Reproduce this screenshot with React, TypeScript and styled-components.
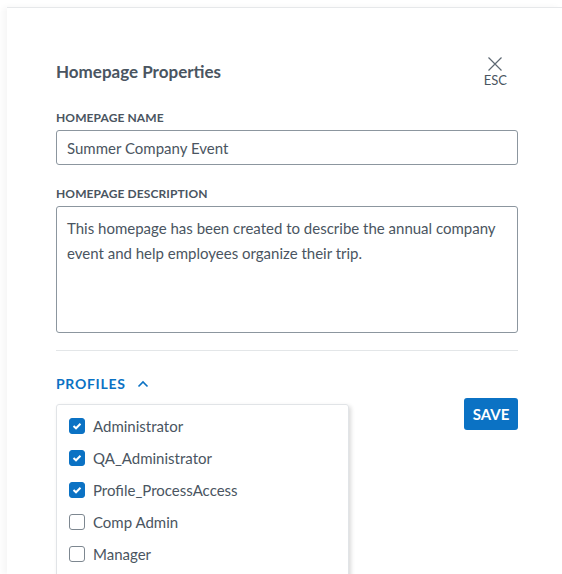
import React, { useState } from 'react';
import styled, { createGlobalStyle } from 'styled-components';

const GlobalStyle = createGlobalStyle`
  html, body {
    margin: 0;
    padding: 0;
    background: #ffffff;
  }
  body {
    font-family: Lato, "Noto Sans", sans-serif;
    color: #4a5561;
  }
`;

const profiles = [
  { name: 'Administrator', checked: true },
  { name: 'QA_Administrator', checked: true },
  { name: 'Profile_ProcessAccess', checked: true },
  { name: 'Comp Admin', checked: false },
  { name: 'Manager', checked: false },
];

const App: React.FC = () => {
  const [items, setItems] = useState(profiles);

  const toggle = (index: number) => {
    setItems(items.map((el, i) => (i === index ? { ...el, checked: !el.checked } : el)));
  };

  return (
    <Page>
      <GlobalStyle />
      <Panel>
        <Header>
          <Title>Homepage Properties</Title>
          <CloseButton>
            <svg width="16" height="16" viewBox="0 0 16 16">
              <path d="M1.5 1.5 L14.5 14.5 M14.5 1.5 L1.5 14.5" stroke="#5d6873" strokeWidth="1.2" />
            </svg>
            <EscText>ESC</EscText>
          </CloseButton>
        </Header>

        <Label>Homepage Name</Label>
        <TextInput defaultValue="Summer Company Event" />

        <Label $top={21}>Homepage Description</Label>
        <TextArea defaultValue="This homepage has been created to describe the annual company event and help employees organize their trip." />

        <Divider />

        <ProfilesRow>
          <ProfilesToggle>
            Profiles
            <svg width="12" height="8" viewBox="0 0 12 8">
              <path d="M1.5 6.5 L6 2 L10.5 6.5" stroke="#0b72c4" strokeWidth="1.6" fill="none" />
            </svg>
          </ProfilesToggle>
        </ProfilesRow>

        <BottomRow>
          <Dropdown>
            {items.map((el, index) => (
              <Option key={el.name} onClick={() => toggle(index)}>
                <Box $checked={el.checked}>
                  {el.checked && (
                    <svg width="10" height="8" viewBox="0 0 10 8">
                      <path d="M1.5 4 L4 6.3 L8.5 1.7" stroke="#ffffff" strokeWidth="2" fill="none" />
                    </svg>
                  )}
                </Box>
                <OptionText>{el.name}</OptionText>
              </Option>
            ))}
          </Dropdown>
          <SaveButton>SAVE</SaveButton>
        </BottomRow>
      </Panel>
    </Page>
  );
};

export default App;

const Page = styled.div`
  width: 562px;
  height: 574px;
  overflow: hidden;
  padding-top: 7px;
  box-sizing: border-box;
`;

const Panel = styled.div`
  margin-left: 7px;
  height: 567px;
  border-top: 1px solid #e6e8ea;
  box-shadow: -4px 0 6px rgba(0, 0, 0, 0.04);
  padding: 0 44px 0 49px;
  box-sizing: border-box;
  overflow: hidden;
`;

const Header = styled.div`
  display: flex;
  justify-content: space-between;
  align-items: flex-start;
  padding-top: 48px;
  height: 94px;
  box-sizing: border-box;
`;

const Title = styled.h2`
  margin: 5px 0 0 0;
  font-size: 17px;
  font-weight: 700;
  color: #4a5561;
`;

const CloseButton = styled.div`
  display: flex;
  flex-direction: column;
  align-items: center;
  margin-right: 11px;
  cursor: pointer;
`;

const EscText = styled.span`
  font-size: 13px;
  line-height: 14px;
  color: #4a5561;
  margin-top: 1px;
`;

const Label = styled.div<{ $top?: number }>`
  margin-top: ${(p) => p.$top ?? 8}px;
  font-size: 12px;
  font-weight: 700;
  text-transform: uppercase;
  letter-spacing: 0.1px;
  color: #4a5561;
  line-height: 16px;
  margin-bottom: 4px;
`;

const TextInput = styled.input`
  display: block;
  width: 100%;
  height: 35px;
  box-sizing: border-box;
  border: 1px solid #8c969f;
  border-radius: 3px;
  padding: 0 10px;
  font-family: inherit;
  font-size: 15px;
  color: #4a5561;
  outline: none;
`;

const TextArea = styled.textarea`
  display: block;
  width: 100%;
  height: 127px;
  box-sizing: border-box;
  border: 1px solid #8c969f;
  border-radius: 3px;
  padding: 9px 10px;
  font-family: inherit;
  font-size: 15px;
  line-height: 25px;
  color: #4a5561;
  resize: none;
  outline: none;
`;

const Divider = styled.hr`
  border: none;
  border-top: 1px solid #e3e6e8;
  margin: 17px 0 0 0;
`;

const ProfilesRow = styled.div`
  padding-top: 22px;
  height: 53px;
  box-sizing: border-box;
`;

const ProfilesToggle = styled.div`
  display: inline-flex;
  align-items: center;
  gap: 11px;
  font-size: 14px;
  font-weight: 700;
  letter-spacing: 0.7px;
  text-transform: uppercase;
  color: #0b72c4;
  cursor: pointer;
  line-height: 16px;
`;

const BottomRow = styled.div`
  display: flex;
  justify-content: space-between;
  align-items: flex-start;
`;

const Dropdown = styled.div`
  width: 293px;
  border: 1px solid #e1e4e7;
  border-radius: 3px;
  box-shadow: 2px 2px 4px rgba(0, 0, 0, 0.15);
  padding: 5px 0 20px 12px;
  box-sizing: border-box;
`;

const Option = styled.label`
  display: flex;
  align-items: center;
  gap: 8px;
  height: 32px;
  cursor: pointer;
`;

const Box = styled.span<{ $checked: boolean }>`
  width: 16px;
  height: 16px;
  box-sizing: border-box;
  border-radius: 3px;
  display: flex;
  align-items: center;
  justify-content: center;
  background: ${(p) => (p.$checked ? '#0b72c4' : '#ffffff')};
  border: 1px solid ${(p) => (p.$checked ? '#0b72c4' : '#7d8790')};
`;

const OptionText = styled.span`
  font-size: 15px;
  color: #4a5561;
`;

const SaveButton = styled.button`
  margin-top: -6px;
  width: 54px;
  height: 32px;
  border: none;
  border-radius: 3px;
  background: #0b72c4;
  color: #ffffff;
  font-family: inherit;
  font-size: 15px;
  font-weight: 700;
  cursor: pointer;
`;
